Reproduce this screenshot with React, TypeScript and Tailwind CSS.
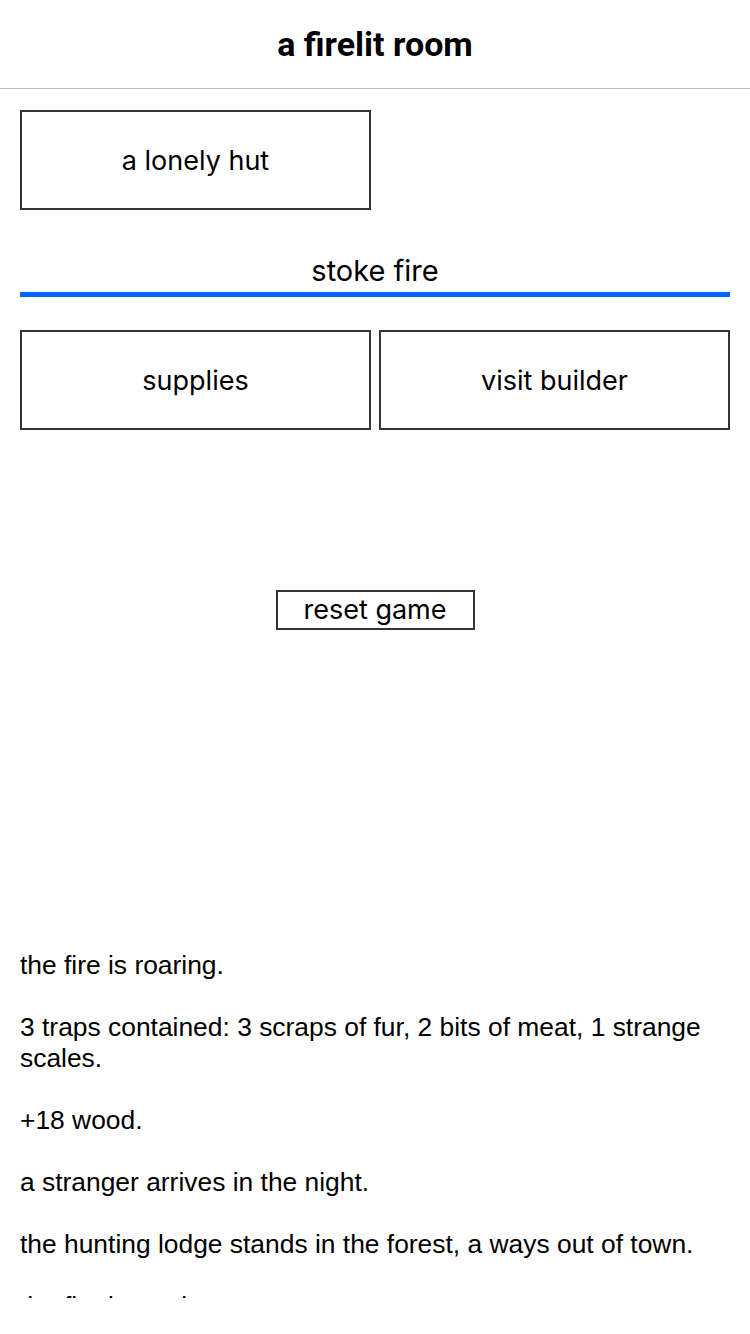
const logLines = [
  "the fire is roaring.",
  "3 traps contained: 3 scraps of fur, 2 bits of meat, 1 strange scales.",
  "+18 wood.",
  "a stranger arrives in the night.",
  "the hunting lodge stands in the forest, a ways out of town.",
  "the fire is roaring.",
];

const Box = ({ label }: { label: string }) => (
  <div className="flex h-[100px] flex-1 items-center justify-center border-2 border-[#333333] pt-[2px] text-[27px] text-black">
    {label}
  </div>
);

const App = () => {
  return (
    <div className="flex h-[1334px] w-[750px] flex-col bg-white font-['Inter',sans-serif] text-black">
      {/* header */}
      <div className="flex h-[89px] shrink-0 items-center justify-center border-b border-[#bbbbbb] font-['Roboto',sans-serif] text-[34px] font-bold">
        a firelit room
      </div>

      <div className="flex flex-col px-5">
        <div className="mt-[21px] flex w-[351px]">
          <Box label="a lonely hut" />
        </div>

        {/* stoke fire with cooldown bar */}
        <div className="mt-[42px] flex flex-col items-center">
          <span className="text-[29px] leading-[38px]">stoke fire</span>
          <div className="mt-[2px] h-[5px] w-full bg-[#0064ff]" />
        </div>

        <div className="mt-[33px] flex gap-2">
          <Box label="supplies" />
          <Box label="visit builder" />
        </div>

        <div className="mt-[160px] flex justify-center">
          <div className="flex h-[40px] w-[199px] items-center justify-center border-2 border-[#333333] pt-[1px] text-[27px]">
            reset game
          </div>
        </div>
      </div>

      {/* log */}
      <div className="mt-[320px] h-[348px] overflow-hidden px-5 font-['Liberation_Sans',sans-serif] text-[26.4px] leading-[31px]">
        {logLines.map((line, i) => (
          <p key={i} className="mb-[31px]">
            {line}
          </p>
        ))}
      </div>
    </div>
  );
};

export default App;
